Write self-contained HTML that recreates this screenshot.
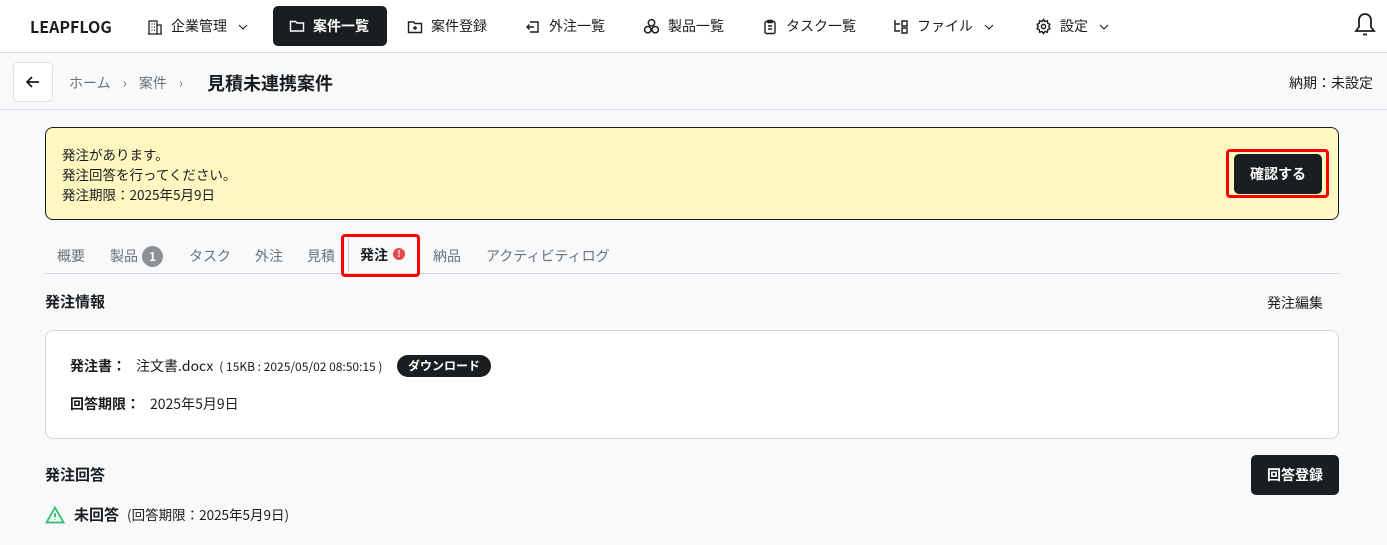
<!DOCTYPE html>
<html><head><meta charset="utf-8"><style>
*{box-sizing:border-box;margin:0;padding:0}
body{width:1387px;height:545px;overflow:hidden;background:#f8f9fb;font-family:"Noto Sans CJK JP","Liberation Sans",sans-serif;color:#1a1d1f;font-size:14px;line-height:1.45;position:relative}
.abs{position:absolute}
.hdr{position:absolute;left:0;top:0;width:1387px;height:53px;background:#fff;border-bottom:1px solid #d9dde2}
.nav{position:absolute;top:0;height:53px;display:flex;align-items:center;font-size:14px;color:#1a1d1f;white-space:nowrap}
.nav svg{margin-right:8px}
.chev{margin-left:10px}
.act{background:#1b1e20;color:#fff;border-radius:5px;height:40px;top:6px;padding:0 16px;font-weight:bold}
.sub{position:absolute;top:54px;left:0;width:1387px;height:56px;border-bottom:1px solid #d9dde2;background:#f8f9fb}
</style></head><body>
<div class="hdr"></div>
<div class="nav" style="left:30px;font-weight:bold;font-size:16px">LEAPFLOG</div>
<div class="nav" style="left:147px"><svg width="16" height="16" viewBox="0 0 16 16" fill="none" stroke="#1a1d1f" stroke-width="1.3"><path d="M2 15V2h8v13M10 6h4v9M1 15h14M4.5 5h1M7 5h1M4.5 8h1M7 8h1M4.5 11h1M7 11h1"/></svg>企業管理<svg class="chev" width="12" height="12" viewBox="0 0 12 12" fill="none" stroke="#1a1d1f" stroke-width="1.1"><path d="M2 4l4 4 4-4"/></svg></div>
<div class="nav act" style="left:273px;width:114px"><svg width="16" height="16" viewBox="0 0 16 16" fill="none" stroke="#fff" stroke-width="1.4"><path d="M1.5 3.5h5l1.5 1.5h6.5v8h-13z"/></svg>案件一覧</div>
<div class="nav" style="left:407px"><svg width="16" height="16" viewBox="0 0 16 16" fill="none" stroke="#1a1d1f" stroke-width="1.4"><path d="M1.5 3h5l1.5 1.5h6.5v9h-13zM8 7v4M6 9h4"/></svg>案件登録</div>
<div class="nav" style="left:525px"><svg width="16" height="16" viewBox="0 0 16 16" fill="none" stroke="#1a1d1f" stroke-width="1.4"><path d="M5 3h8v10H5M9 8H2M4.5 5.5L2 8l2.5 2.5"/></svg>外注一覧</div>
<div class="nav" style="left:643px"><svg width="17" height="17" viewBox="0 0 16 16" fill="none" stroke="#1a1d1f" stroke-width="1.4"><circle cx="8" cy="4.5" r="3"/><circle cx="4.5" cy="11" r="3"/><circle cx="11.5" cy="11" r="3"/></svg>製品一覧</div>
<div class="nav" style="left:762px"><svg width="16" height="16" viewBox="0 0 16 16" fill="none" stroke="#1a1d1f" stroke-width="1.4"><rect x="3" y="2.5" width="10" height="12" rx="1.5"/><path d="M6 1.5h4v2H6zM6 7h4M6 10h4"/></svg>タスク一覧</div>
<div class="nav" style="left:893px"><svg width="16" height="16" viewBox="0 0 16 16" fill="none" stroke="#1a1d1f" stroke-width="1.4"><path d="M2 1v11h5M2 5h5M9 2h5v5H9zM9 9h5v5H9z"/></svg>ファイル<svg class="chev" width="12" height="12" viewBox="0 0 12 12" fill="none" stroke="#1a1d1f" stroke-width="1.1"><path d="M2 4l4 4 4-4"/></svg></div>
<div class="nav" style="left:1035px"><svg width="17" height="17" viewBox="0 0 24 24" fill="none" stroke="#1a1d1f" stroke-width="2"><circle cx="12" cy="12" r="3"/><path d="M12 2l2 3 3.5-1 .5 3.5 3 1.5-1.5 3 1.5 3-3 1.5-.5 3.5-3.5-1-2 3-2-3-3.5 1-.5-3.5-3-1.5 1.5-3L3 9l3-1.5.5-3.5 3.5 1z"/></svg>設定<svg class="chev" width="12" height="12" viewBox="0 0 12 12" fill="none" stroke="#1a1d1f" stroke-width="1.1"><path d="M2 4l4 4 4-4"/></svg></div>
<svg class="abs" style="left:1354px;top:12px" width="22" height="26" viewBox="0 0 22 26" fill="none" stroke="#1a1d1f" stroke-width="1.8"><path d="M11 2a6 6 0 0 0-6 6v7l-3 4h18l-3-4V8a6 6 0 0 0-6-6zM9 22.5h4"/></svg>

<div class="sub"></div>
<div class="abs" style="left:13px;top:62px;width:40px;height:40px;background:#fff;border:1px solid #dde1e5;border-radius:5px"></div>
<svg class="abs" style="left:24px;top:73px" width="18" height="18" viewBox="0 0 18 18" fill="none" stroke="#1a1d1f" stroke-width="1.8"><path d="M15 9H3M8 4L3 9l5 5"/></svg>
<div class="abs" style="left:69px;top:73px;color:#6a737c;font-size:14px;white-space:nowrap">ホーム<span style="margin:0 12px">›</span>案件<span style="margin:0 12px">›</span></div>
<div class="abs" style="left:207px;top:70px;font-size:18px;font-weight:bold">見積未連携案件</div>
<div class="abs" style="right:14px;top:73px;font-size:14px">納期：未設定</div>

<div class="abs" style="left:45px;top:127px;width:1294px;height:93px;background:#fff7c2;border:1px solid #1a1d1f;border-radius:8px"></div>
<div class="abs" style="left:62px;top:145px;font-size:13.5px;line-height:19.8px">発注があります。<br>発注回答を行ってください。<br>発注期限：2025年5月9日</div>
<div class="abs" style="left:1226px;top:149px;width:103px;height:49px;border:3px solid #f00;border-radius:4px"></div>
<div class="abs" style="left:1234px;top:154px;width:88px;height:40px;background:#1b1e20;border-radius:5px;color:#fff;font-weight:bold;font-size:14px;text-align:center;line-height:40px">確認する</div>

<div class="abs" style="left:45px;top:273px;width:1294px;height:1px;background:#d4d8dd"></div>
<div class="abs" style="left:57px;top:246px;font-size:14px;color:#6a737c;white-space:nowrap">概要</div>
<div class="abs" style="left:110px;top:246px;font-size:14px;color:#6a737c">製品</div>
<div class="abs" style="left:142px;top:246px;width:21px;height:21px;border-radius:50%;background:#8b9196;color:#fff;font-size:12px;font-weight:bold;text-align:center;line-height:21px">1</div>
<div class="abs" style="left:189px;top:246px;font-size:14px;color:#6a737c">タスク</div>
<div class="abs" style="left:255px;top:246px;font-size:14px;color:#6a737c">外注</div>
<div class="abs" style="left:307px;top:246px;font-size:14px;color:#6a737c">見積</div>
<div class="abs" style="left:341px;top:234px;width:79px;height:43px;border:3px solid #f00;border-radius:4px"></div>
<div class="abs" style="left:348px;top:238px;width:1px;height:34px;background:#ccc"></div>
<div class="abs" style="left:360px;top:245px;font-size:14px;font-weight:bold">発注</div>
<div class="abs" style="left:393px;top:248px;width:12px;height:12px;border-radius:50%;background:#e5484d;color:#fff;font-size:9px;font-weight:bold;text-align:center;line-height:12px">!</div>
<div class="abs" style="left:433px;top:246px;font-size:14px;color:#6a737c">納品</div>
<div class="abs" style="left:486px;top:246px;font-size:14px;color:#6a737c">アクティビティログ</div>

<div class="abs" style="left:45px;top:291px;font-size:15px;font-weight:bold">発注情報</div>
<div class="abs" style="left:1267px;top:293px;font-size:14px">発注編集</div>

<div class="abs" style="left:45px;top:330px;width:1294px;height:109px;background:#fff;border:1px solid #d4d8dd;border-radius:8px"></div>
<div class="abs" style="left:70px;top:356px;font-size:14px;white-space:nowrap"><b>発注書：</b><span style="margin-left:10px">注文書.docx</span><span style="font-size:12px;margin-left:6px">( 15KB : 2025/05/02 08:50:15 )</span></div>
<div class="abs" style="left:397px;top:355px;width:94px;height:22px;border-radius:11px;background:#1b1e20;color:#fff;font-size:12px;font-weight:bold;text-align:center;line-height:22px">ダウンロード</div>
<div class="abs" style="left:70px;top:394px;font-size:14px;white-space:nowrap"><b>回答期限：</b><span style="margin-left:10px">2025年5月9日</span></div>

<div class="abs" style="left:45px;top:464px;font-size:15px;font-weight:bold">発注回答</div>
<div class="abs" style="left:1251px;top:455px;width:88px;height:40px;background:#1b1e20;border-radius:5px;color:#fff;font-weight:bold;font-size:14px;text-align:center;line-height:40px">回答登録</div>
<svg class="abs" style="left:45px;top:506px" width="20" height="18" viewBox="0 0 20 18" fill="none" stroke="#2fbf71" stroke-width="1.8"><path d="M10 1.5L1.5 16.5h17zM10 7v4.5M10 13.5v.5"/></svg>
<div class="abs" style="left:74px;top:504px;white-space:nowrap"><b style="font-size:15px">未回答</b><span style="font-size:13.5px;margin-left:8px">(回答期限：2025年5月9日)</span></div>
</body></html>
